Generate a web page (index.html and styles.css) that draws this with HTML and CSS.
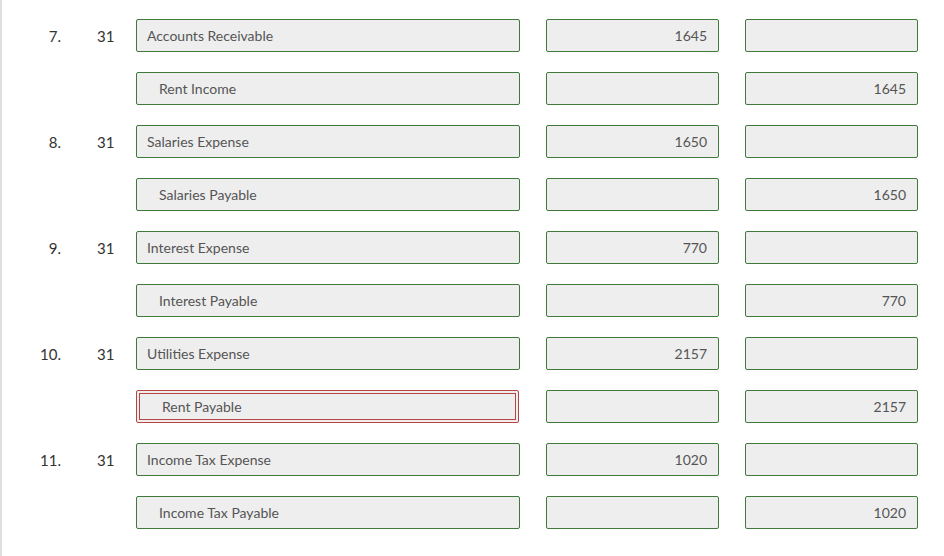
FILE: index.html
```html
<!DOCTYPE html>
<html>
<head>
<meta charset="utf-8">
<link rel="stylesheet" href="styles.css">
</head>
<body>
<div class="sheet">
  <div class="grid">
    <div class="num">7.</div><div class="date">31</div>
    <div class="box acct">Accounts Receivable</div>
    <div class="box amt">1645</div><div class="box amt"></div>

    <div class="num"></div><div class="date"></div>
    <div class="box acct indent">Rent Income</div>
    <div class="box amt"></div><div class="box amt">1645</div>

    <div class="num">8.</div><div class="date">31</div>
    <div class="box acct">Salaries Expense</div>
    <div class="box amt">1650</div><div class="box amt"></div>

    <div class="num"></div><div class="date"></div>
    <div class="box acct indent">Salaries Payable</div>
    <div class="box amt"></div><div class="box amt">1650</div>

    <div class="num">9.</div><div class="date">31</div>
    <div class="box acct">Interest Expense</div>
    <div class="box amt">770</div><div class="box amt"></div>

    <div class="num"></div><div class="date"></div>
    <div class="box acct indent">Interest Payable</div>
    <div class="box amt"></div><div class="box amt">770</div>

    <div class="num">10.</div><div class="date">31</div>
    <div class="box acct">Utilities Expense</div>
    <div class="box amt">2157</div><div class="box amt"></div>

    <div class="num"></div><div class="date"></div>
    <div class="wrong"><div class="wrong-inner">Rent Payable</div></div>
    <div class="box amt"></div><div class="box amt">2157</div>

    <div class="num">11.</div><div class="date">31</div>
    <div class="box acct">Income Tax Expense</div>
    <div class="box amt">1020</div><div class="box amt"></div>

    <div class="num"></div><div class="date"></div>
    <div class="box acct indent">Income Tax Payable</div>
    <div class="box amt"></div><div class="box amt">1020</div>
  </div>
</div>
</body>
</html>
```

FILE: styles.css
```css
html, body {
  margin: 0;
  padding: 0;
  background: #fff;
}
body {
  font-family: Lato, "Liberation Sans", sans-serif;
}
.sheet {
  border-left: 2px solid #dedede;
  height: 556px;
  box-sizing: border-box;
  padding-top: 19px;
}
.grid {
  display: grid;
  grid-template-columns: 59px 75px 384px 199px 199px;
  grid-auto-rows: 33px;
  row-gap: 20px;
}
.num, .date {
  font-size: 15px;
  color: #333;
  display: flex;
  align-items: center;
}
.num {
  justify-content: flex-end;
}
.date {
  padding-left: 36px;
}
.box {
  box-sizing: border-box;
  border: 1px solid #3f7a3a;
  border-radius: 2px;
  background: #eeeeee;
  font-size: 14px;
  color: #555;
  display: flex;
  align-items: center;
  padding: 0 11px 0 10px;
}
.amt {
  justify-content: flex-end;
  margin-left: 26px;
}
.indent {
  padding-left: 22px;
}
.wrong {
  box-sizing: border-box;
  border: 1px solid #b94444;
  border-radius: 2px;
  background: #eeeeee;
  padding: 2px;
  width: 383px;
}
.wrong-inner {
  box-sizing: border-box;
  height: 100%;
  border: 1px solid #b94444;
  font-size: 14px;
  color: #555;
  display: flex;
  align-items: center;
  padding-left: 22px;
}
```
